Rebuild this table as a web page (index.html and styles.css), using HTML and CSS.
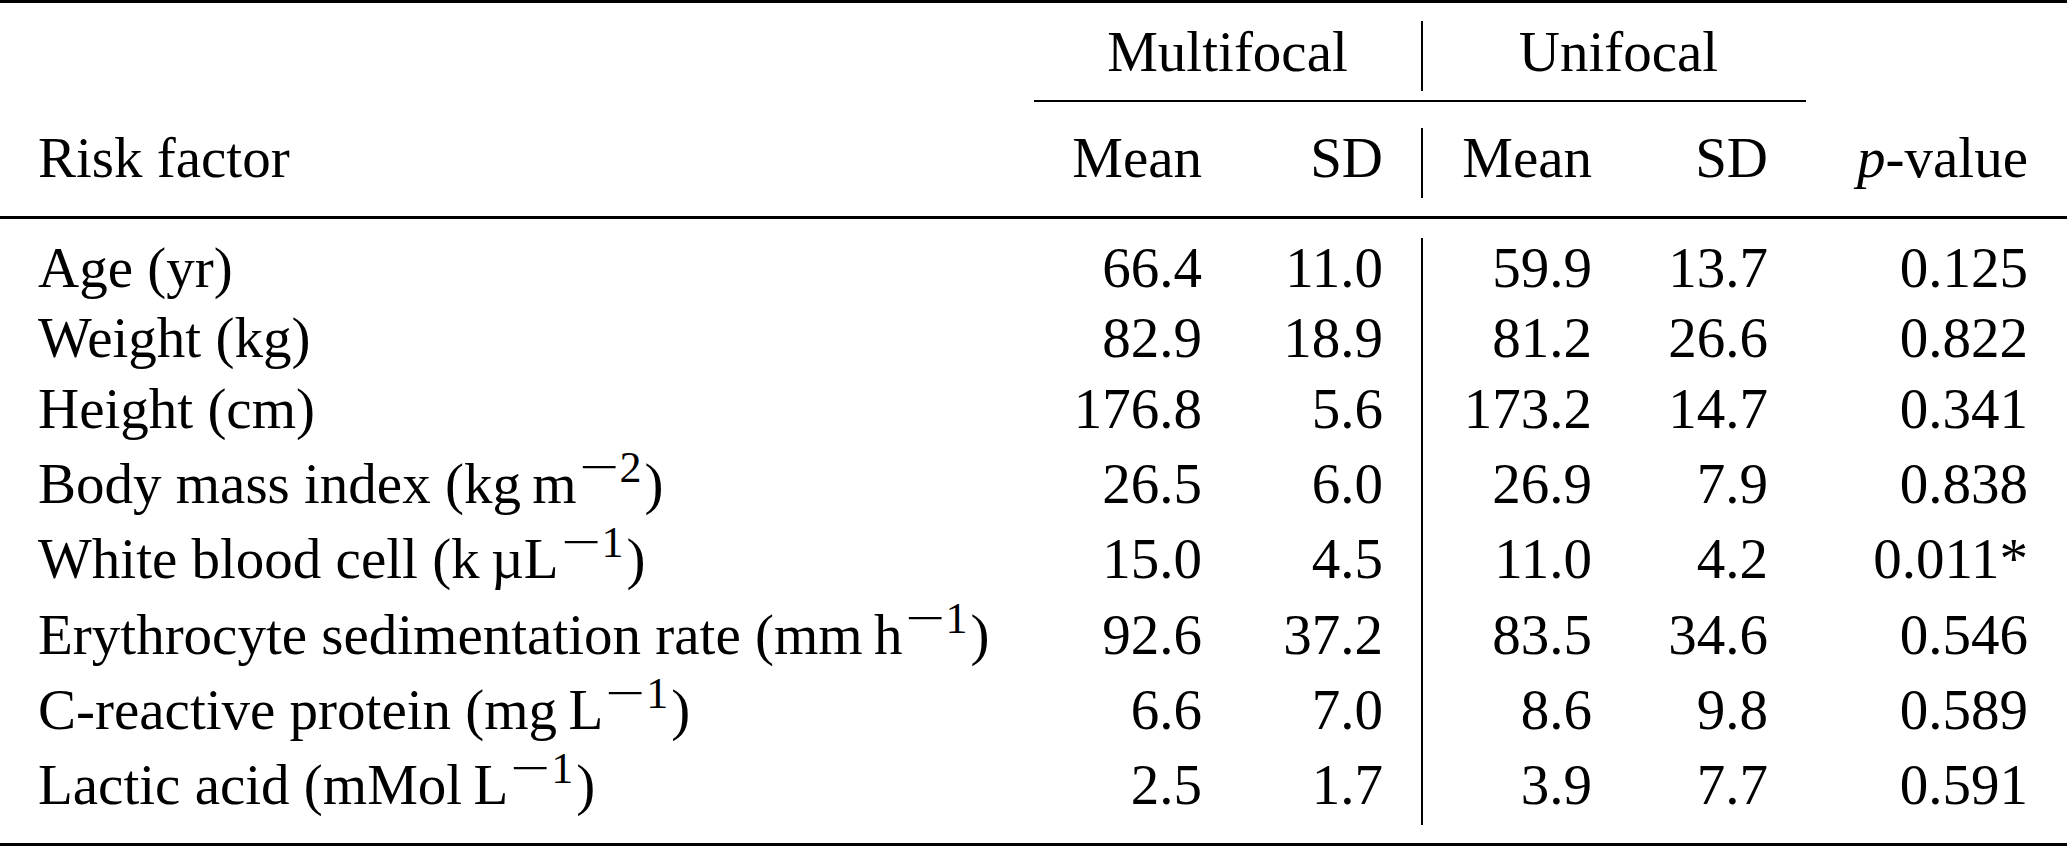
FILE: index.html
```html
<!DOCTYPE html>
<html lang="en">
<head>
<meta charset="utf-8">
<title>Risk factors: multifocal vs unifocal</title>
<link rel="stylesheet" href="styles.css">
</head>
<body>
<table class="tbl">
  <colgroup>
    <col class="c0"><col class="c1"><col class="c2"><col class="c3"><col class="c4"><col class="c5">
  </colgroup>
  <tbody>
    <tr class="gap g18"><td colspan="6"></td></tr>
    <tr class="head h1">
      <td></td>
      <td colspan="2" class="ctr">Multifocal</td>
      <td colspan="2" class="ctr vl shift">Unifocal</td>
      <td></td>
    </tr>
    <tr class="gap g9"><td colspan="6"></td></tr>
    <tr class="cmid"><td></td><td colspan="4" class="ink"></td><td></td></tr>
    <tr class="gap g26"><td colspan="6"></td></tr>
    <tr class="head h2">
      <td class="lbl">Risk factor</td>
      <td class="num">Mean</td>
      <td class="num">SD</td>
      <td class="num vl">Mean</td>
      <td class="num">SD</td>
      <td class="num last"><i>p</i>-value</td>
    </tr>
    <tr class="gap g18"><td colspan="6"></td></tr>
    <tr class="mid"><td colspan="6" class="ink"></td></tr>
    <tr class="gap g19"><td colspan="6"></td></tr>

    <tr class="row">
      <td class="lbl">Age (yr)</td>
      <td class="num">66.4</td><td class="num">11.0</td>
      <td class="num vl">59.9</td><td class="num">13.7</td>
      <td class="num last">0.125</td>
    </tr>
    <tr class="row extra">
      <td class="lbl">Weight (kg)</td>
      <td class="num">82.9</td><td class="num">18.9</td>
      <td class="num vl">81.2</td><td class="num">26.6</td>
      <td class="num last">0.822</td>
    </tr>
    <tr class="row">
      <td class="lbl">Height (cm)</td>
      <td class="num">176.8</td><td class="num">5.6</td>
      <td class="num vl">173.2</td><td class="num">14.7</td>
      <td class="num last">0.341</td>
    </tr>
    <tr class="row tall">
      <td class="lbl">Body mass index (kg&#8201;m<span class="sup"><span class="minus">&minus;</span>2</span>)</td>
      <td class="num">26.5</td><td class="num">6.0</td>
      <td class="num vl">26.9</td><td class="num">7.9</td>
      <td class="num last">0.838</td>
    </tr>
    <tr class="row tall extra">
      <td class="lbl">White blood cell (k&#8201;&micro;L<span class="sup"><span class="minus">&minus;</span>1</span>)</td>
      <td class="num">15.0</td><td class="num">4.5</td>
      <td class="num vl">11.0</td><td class="num">4.2</td>
      <td class="num last">0.011*</td>
    </tr>
    <tr class="row tall">
      <td class="lbl">Erythrocyte sedimentation rate (mm&#8201;h<span class="sup"><span class="minus">&minus;</span>1</span>)</td>
      <td class="num">92.6</td><td class="num">37.2</td>
      <td class="num vl">83.5</td><td class="num">34.6</td>
      <td class="num last">0.546</td>
    </tr>
    <tr class="row tall">
      <td class="lbl">C-reactive protein (mg&#8201;L<span class="sup"><span class="minus">&minus;</span>1</span>)</td>
      <td class="num">6.6</td><td class="num">7.0</td>
      <td class="num vl">8.6</td><td class="num">9.8</td>
      <td class="num last">0.589</td>
    </tr>
    <tr class="row tall">
      <td class="lbl">Lactic acid (mMol&#8201;L<span class="sup"><span class="minus">&minus;</span>1</span>)</td>
      <td class="num">2.5</td><td class="num">1.7</td>
      <td class="num vl">3.9</td><td class="num">7.7</td>
      <td class="num last">0.591</td>
    </tr>
    <tr class="gap g18"><td colspan="6"></td></tr>
  </tbody>
</table>
</body>
</html>
```

FILE: styles.css
```css
html, body {
  margin: 0;
  padding: 0;
  background: #fff;
}

body {
  font-family: "Liberation Serif", "Times New Roman", serif;
  font-size: 57px;
  color: #000;
}

.tbl {
  width: 2067px;
  table-layout: fixed;
  border-collapse: separate;
  border-spacing: 0;
  border-top: 3px solid #000;
  border-bottom: 3px solid #000;
}

.c0 { width: 1034px; }
.c1 { width: 206px; }
.c2 { width: 181px; }
.c3 { width: 209px; }
.c4 { width: 176px; }
.c5 { width: 261px; }

.tbl td {
  padding: 0;
  white-space: nowrap;
  vertical-align: top;
}

/* spacer rows (booktabs rule separation) */
.gap td {
  font-size: 0;
  line-height: 0;
}
.g9 td { height: 9px; }
.g18 td { height: 18px; }
.g19 td { height: 19px; }
.g26 td { height: 26px; }

/* rules */
.cmid td { height: 2px; font-size: 0; line-height: 0; }
.mid td { height: 3px; font-size: 0; line-height: 0; }
.ink { background: #000; }

/* header rows */
.h1 td {
  line-height: 62px;
  padding-bottom: 8px;
}
.h2 td {
  line-height: 60px;
  padding-bottom: 10px;
}

/* body rows */
.row td {
  line-height: 60px;
  padding-bottom: 10px;
}
.row.extra td { padding-bottom: 11px; }
.row.tall td { padding-top: 5px; }

.ctr { text-align: center; }
.tbl td.shift { padding-left: 8px; }

.lbl {
  padding-left: 38px !important;
  text-align: left;
}

.num {
  text-align: right;
  padding-right: 38px !important;
}
.num.last { padding-right: 39px !important; }

.vl { border-left: 2px solid #000; }

.sup {
  font-size: 44px;
  line-height: 26px;
  vertical-align: 21px;
  margin-right: 3px;
}

.minus {
  display: inline-block;
  transform: scaleX(1.6);
  margin: 0 8px 0 10px;
}
```
